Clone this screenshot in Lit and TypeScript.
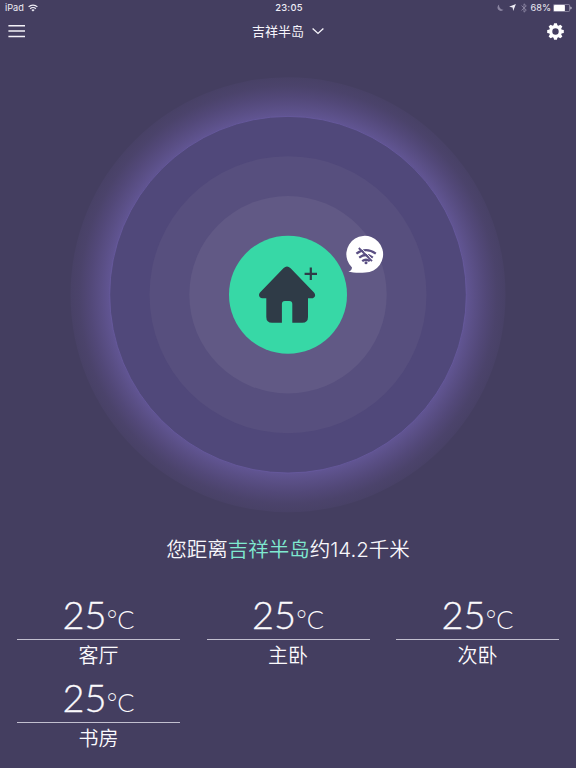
import { LitElement, html, css, svg } from "lit";
import { customElement } from "lit/decorators.js";

interface Room {
  name: string;
  temperature: number;
}

const ROOMS: Room[] = [
  { name: "客厅", temperature: 25 },
  { name: "主卧", temperature: 25 },
  { name: "次卧", temperature: 25 },
  { name: "书房", temperature: 25 },
];

@customElement("status-bar")
class StatusBar extends LitElement {
  static styles = css`
    :host {
      display: grid;
      grid-template-columns: 1fr auto 1fr;
      align-items: center;
      height: 15px;
      padding: 0 4px 0 5px;
      color: #efedf6;
      font: 9.2px/15px Inter, "Liberation Sans", sans-serif;
    }
    .side { display: flex; align-items: center; }
    .right { justify-content: flex-end; }
    .time { font-weight: 500; letter-spacing: 0.2px; font-size: 9.4px; padding-left: 1px; }
    .wifi { margin-left: 4px; }
    .moon { margin-right: 5px; }
    .arrow { margin-right: 5px; }
    .bt { margin-right: 4px; }
    .battery { margin-left: 2px; }
    svg { display: block; }
  `;
  render() {
    return html`
      <div class="side">
        <span>iPad</span>
        <svg class="wifi" width="10" height="8" viewBox="0 0 10 8" fill="none" stroke="#efedf6" stroke-width="1.3">
          <path d="M.6 2.9a6.3 6.3 0 0 1 8.8 0M2.2 4.7a4 4 0 0 1 5.6 0" />
          <path d="M5 7.6 3.4 6a2.3 2.3 0 0 1 3.2 0Z" fill="#efedf6" stroke="none" />
        </svg>
      </div>
      <span class="time">23:05</span>
      <div class="side right">
        <svg class="moon" width="7" height="8" viewBox="0 0 7 8">
          <path d="M2.2.6A3.4 3.4 0 1 0 6.6 5.6 4 4 0 0 1 2.2.6Z" fill="#8b85a1" />
        </svg>
        <svg class="arrow" width="7" height="7" viewBox="0 0 7 7">
          <path d="M6.9.1 4.2 6.9 3.6 3.4.1 2.8Z" fill="#efedf6" />
        </svg>
        <svg class="bt" width="6" height="10" viewBox="0 0 6 10" fill="none" stroke="#8d87a3" stroke-width=".9">
          <path d="M.5 2.6 5.3 7.1 3 9.2V.8L5.3 2.9.5 7.4" />
        </svg>
        <span>68%</span>
        <svg class="battery" width="19" height="8" viewBox="0 0 19 8">
          <rect x=".4" y=".4" width="16.2" height="7.2" rx="1.2" fill="none" stroke="#aaa5bc" stroke-width=".7" />
          <rect x="1" y="1" width="10.9" height="6" rx=".5" fill="#fff" />
          <path d="M17.3 2.6q1.4.2 1.4 1.4t-1.4 1.4Z" fill="#c4c0d1" />
        </svg>
      </div>
    `;
  }
}

function tooth(angle: number) {
  return svg`<path d="M-2.1-5.6-1.4-8.3H1.4L2.1-5.6Z" fill="#fff" transform="rotate(${angle})" />`;
}

@customElement("nav-header")
class NavHeader extends LitElement {
  static styles = css`
    :host {
      display: grid;
      grid-template-columns: 1fr auto 1fr;
      align-items: center;
      height: 32px;
      padding: 0 12px 0 8px;
      color: #f7f5fb;
    }
    .title {
      display: flex;
      align-items: center;
      gap: 8px;
      padding-left: 4px;
      font: 13px/20px "Noto Sans CJK SC", sans-serif;
    }
    .gear { justify-self: end; }
    svg { display: block; }
  `;
  render() {
    const teeth = [0, 45, 90, 135, 180, 225, 270, 315];
    return html`
      <svg width="18" height="14" viewBox="0 0 18 14" fill="none" stroke="#f4f2f8" stroke-width="1.5">
        <path d="M.4 1.7h16.6M.4 7.1h16.6M.4 12.5h16.6" />
      </svg>
      <div class="title">
        <span>吉祥半岛</span>
        <svg width="12" height="8" viewBox="0 0 12 8" fill="none" stroke="#f7f5fb" stroke-width="1.3">
          <path d="M.6 1.4 6 6.4l5.4-5" />
        </svg>
      </div>
      <svg class="gear" width="17" height="17" viewBox="-8.5 -8.5 17 17">
        <circle r="4.8" fill="none" stroke="#fff" stroke-width="3.2" />
        ${teeth.map((a) => tooth(a))}
      </svg>
    `;
  }
}

@customElement("home-radar")
class HomeRadar extends LitElement {
  static styles = css`
    :host { display: flex; justify-content: center; }
    svg { display: block; }
  `;
  render() {
    return html`
      <svg width="440" height="440" viewBox="68 75 440 440">
        <defs>
          <radialGradient id="glow" gradientUnits="userSpaceOnUse" cx="288" cy="294.7" r="217.5">
            <stop offset=".818" stop-color="#615593" />
            <stop offset=".86" stop-color="#5a4f86" />
            <stop offset=".91" stop-color="#524878" />
            <stop offset=".96" stop-color="#4b436b" />
            <stop offset="1" stop-color="#484166" />
          </radialGradient>
        </defs>
        <circle cx="288" cy="294.7" r="217.5" fill="url(#glow)" />
        <circle cx="288" cy="294.7" r="178.3" fill="#50487a" stroke="#685ba0" stroke-width=".8" />
        <circle cx="288" cy="294.7" r="138.5" fill="#574f7e" />
        <circle cx="288" cy="294.7" r="98.7" fill="#615985" />
        <circle cx="288" cy="294.7" r="59" fill="#37d8a6" />
        <path
          d="M283.4 268.2q3.6-3.2 7.2 0L314 292.5q2.5 3.2-.4 5.3-.7.5-1.8.5H308v18.6q0 5.8-5.8 5.8H292.3V304q0-3-3-3h-4.4q-3 0-3 3v18.7h-9.8q-5.8 0-5.8-5.8V298.3h-3.8q-3.4-.2-3.5-3.3 0-1.2 1-2.5Z"
          fill="#2f3b47"
        />
        <path d="M310.8 267.6v12.4M304.6 273.8H317" stroke="#2f3b47" stroke-width="2.2" />
        <path d="M348.4 271.4q3.4-.4 3.6-3.9A18.4 18.4 0 1 1 365.4 272.6Q354 273.3 348.4 271.4Z" fill="#fff" />
        <g fill="none" stroke="#5a4f83">
          <path d="M356.4 253.6Q366 246.6 375.8 253.6M359.2 257.6Q366 252.4 372.8 257.6M362.2 261.2Q366 258.2 369.8 261.2" stroke-width="2.3" />
          <path d="M361 247.9 373.6 260.5" stroke="#fff" stroke-width="1" />
          <path d="M358.8 248 372 261.2" stroke-width="1.9" />
        </g>
        <circle cx="366" cy="262.7" r="1.5" fill="#5a4f83" />
      </svg>
    `;
  }
}

@customElement("room-card")
class RoomCard extends LitElement {
  static properties = { name: {}, temperature: { type: Number } };
  declare name: string;
  declare temperature: number;
  static styles = css`
    :host { display: block; text-align: center; color: #fbfafd; }
    .reading {
      display: flex;
      justify-content: center;
      align-items: baseline;
      height: 46px;
      border-bottom: 1px solid #c2bfcf;
      font-family: Lato, sans-serif;
      font-weight: 300;
    }
    .value { font-size: 38px; line-height: 42px; -webkit-text-stroke: 0.3px #fbfafd; }
    .unit { font-size: 25.5px; line-height: 30px; }
    .name { font: 350 20px/30px "Noto Sans CJK SC", sans-serif; }
  `;
  render() {
    return html`
      <div class="reading">
        <span class="value">${this.temperature}</span><span class="unit">°C</span>
      </div>
      <div class="name">${this.name}</div>
    `;
  }
}

@customElement("app-root")
class AppRoot extends LitElement {
  static styles = css`
    :host {
      display: flex;
      flex-direction: column;
      width: 576px;
      height: 768px;
      overflow: hidden;
      background: #443e60;
    }
    home-radar { margin-top: 28px; }
    .distance {
      margin-top: 17px;
      text-align: center;
      color: #f8f7fb;
      font: 350 20.5px/32px "Noto Sans CJK SC", sans-serif;
      white-space: nowrap;
    }
    .place { color: #7fe9d0; }
    .number { font-family: Inter, sans-serif; font-size: 20.5px; }
    .rooms {
      display: grid;
      grid-template-columns: repeat(3, 163px);
      column-gap: 26.5px;
      row-gap: 5.5px;
      padding: 27px 17px 0;
    }
  `;
  render() {
    return html`
      <status-bar></status-bar>
      <nav-header></nav-header>
      <home-radar></home-radar>
      <div class="distance">您距离<span class="place">吉祥半岛</span>约<span class="number">14.2</span>千米</div>
      <div class="rooms">
        ${ROOMS.map((r) => html`<room-card .name=${r.name} .temperature=${r.temperature}></room-card>`)}
      </div>
    `;
  }
}
